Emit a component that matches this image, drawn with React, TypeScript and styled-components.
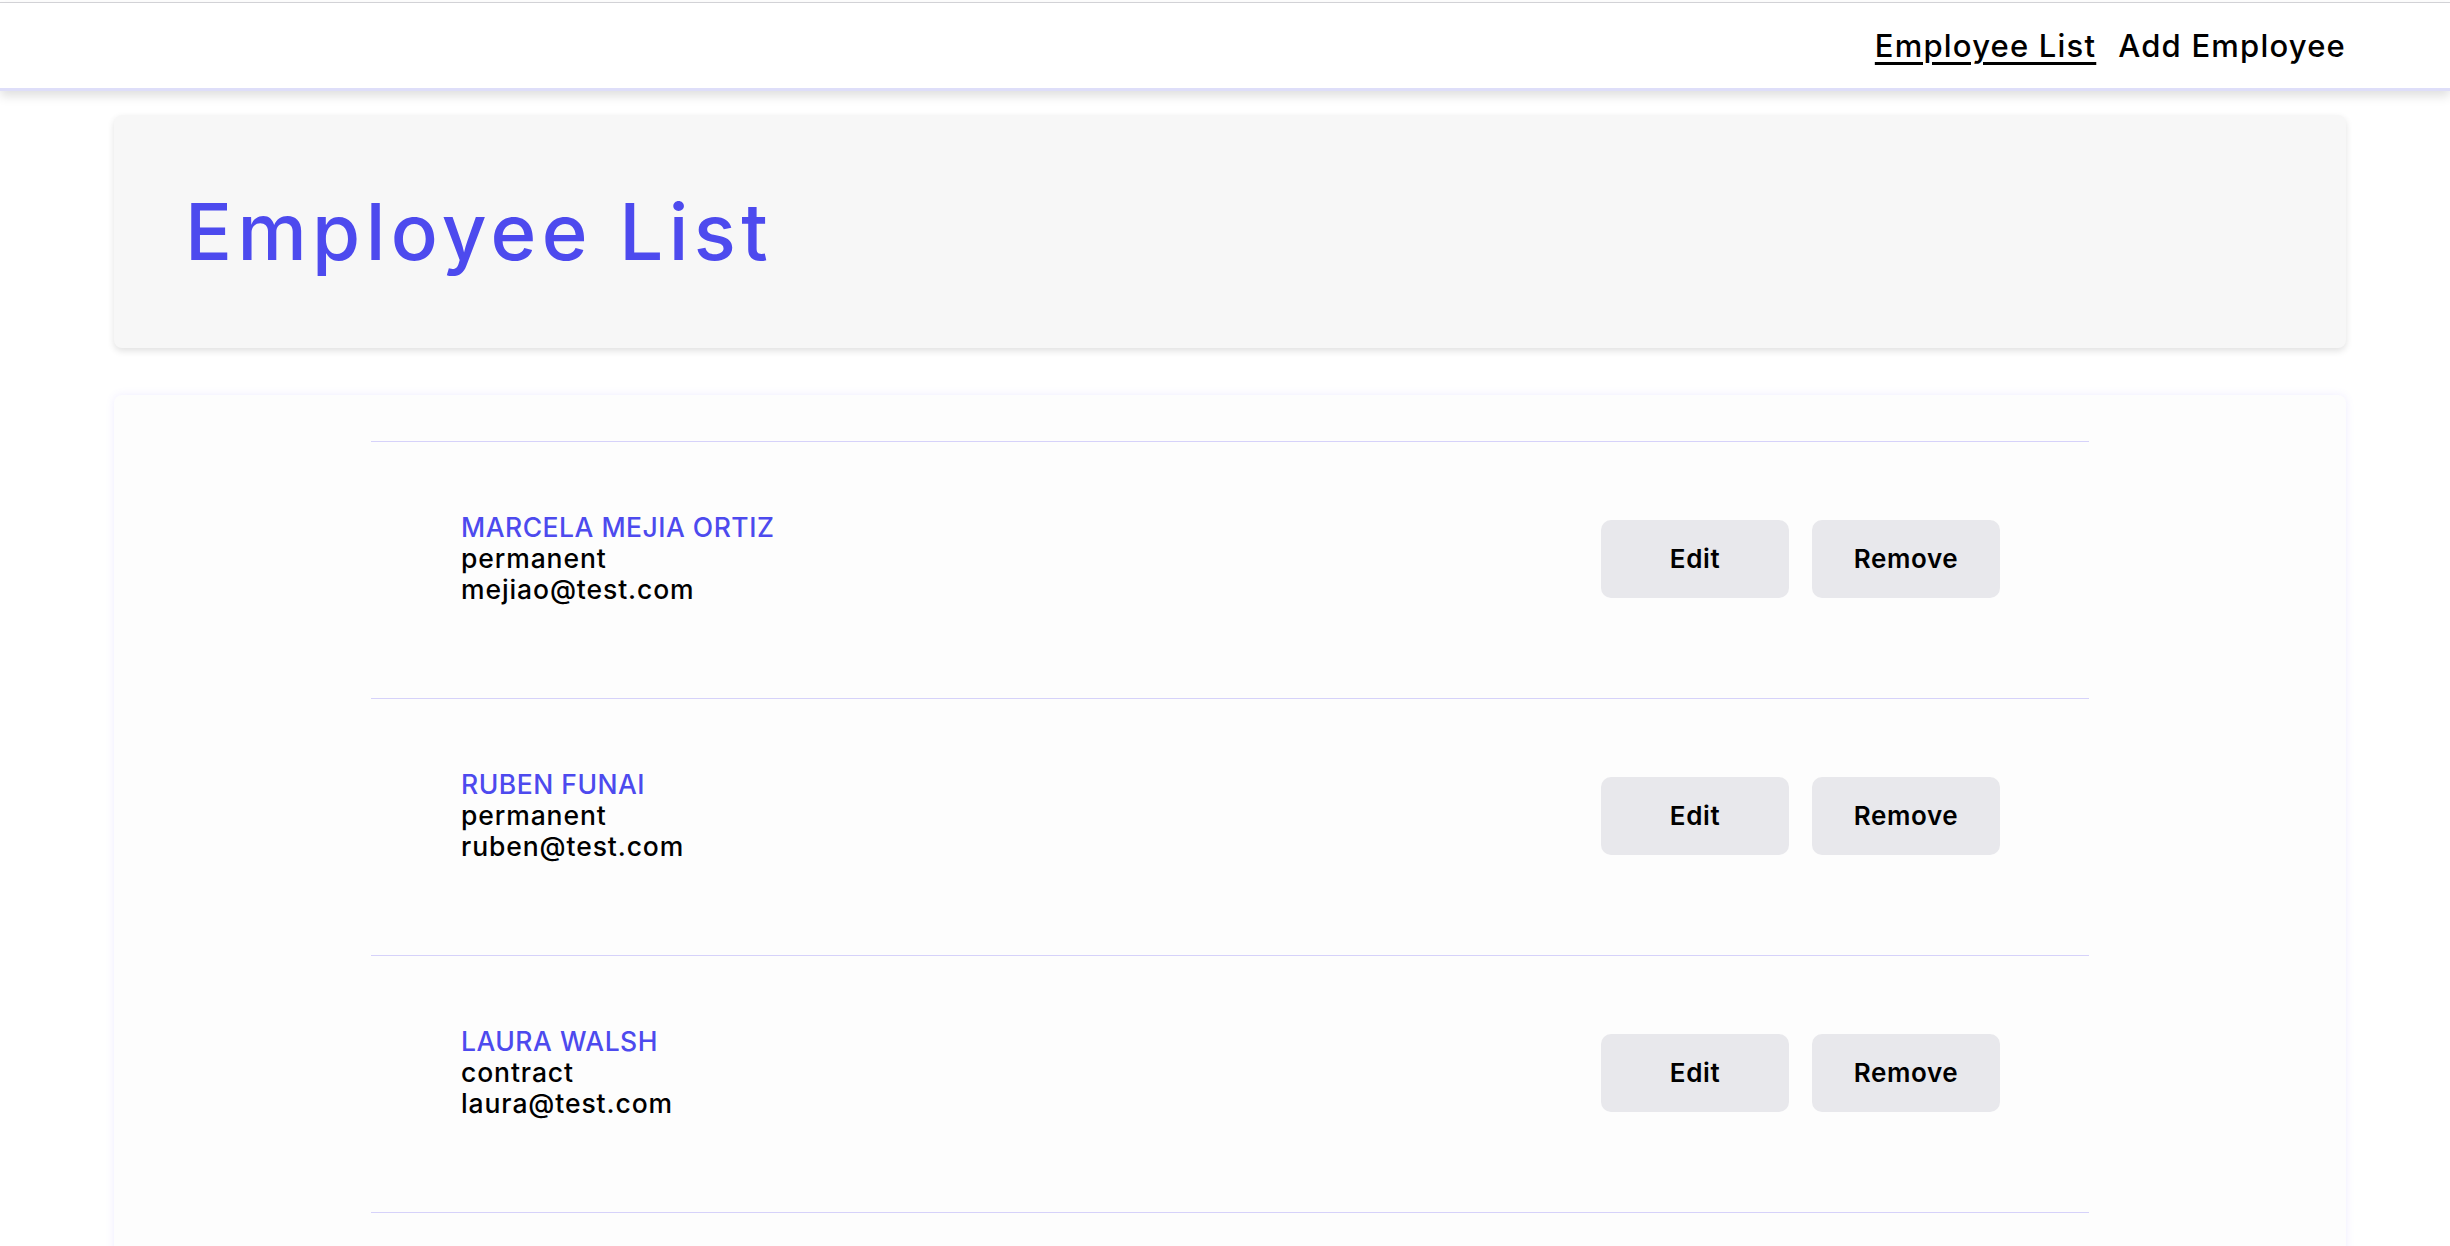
import styled, { createGlobalStyle } from 'styled-components';

type Employee = {
  id: number;
  name: string;
  type: string;
  email: string;
};

const employees: Employee[] = [
  { id: 1, name: 'Marcela Mejia Ortiz', type: 'permanent', email: 'mejiao@test.com' },
  { id: 2, name: 'Ruben Funai', type: 'permanent', email: 'ruben@test.com' },
  { id: 3, name: 'Laura Walsh', type: 'contract', email: 'laura@test.com' },
  { id: 4, name: 'Kai Tanaka', type: 'contract', email: 'kai@test.com' },
];

const GlobalStyle = createGlobalStyle`
  body {
    margin: 0;
    background: #ffffff;
    font-family: Inter, "Open Sans", "Noto Sans", sans-serif;
    color: #000;
  }
`;

const App = () => {
  return (
    <>
      <GlobalStyle />
      <Nav>
        <NavLink active>Employee List</NavLink>
        <NavLink>Add Employee</NavLink>
      </Nav>
      <Main>
        <HeaderCard>
          <Title>Employee List</Title>
        </HeaderCard>
        <ListCard>
          <List>
            {employees.map((e) => (
              <Row key={e.id}>
                <Info>
                  <Name>{e.name}</Name>
                  <Detail>{e.type}</Detail>
                  <Detail>{e.email}</Detail>
                </Info>
                <Actions>
                  <Button>Edit</Button>
                  <Button>Remove</Button>
                </Actions>
              </Row>
            ))}
          </List>
        </ListCard>
      </Main>
    </>
  );
};

const Nav = styled.nav`
  margin-top: 2px;
  height: 85px;
  border-top: 1px solid #d2d2d6;
  border-bottom: 3px solid #dedef9;
  box-shadow: 0 5px 10px rgba(0, 0, 0, 0.13);
  display: flex;
  align-items: center;
  justify-content: flex-end;
  gap: 22px;
  padding-right: 104px;
  background: #fff;
`;

const NavLink = styled.a<{ active?: boolean }>`
  font-size: 31px;
  font-weight: 500;
  letter-spacing: 1.2px;
  color: #000;
  cursor: pointer;
  text-decoration: ${(p) => (p.active ? 'underline' : 'none')};
  text-decoration-thickness: 3px;
  text-underline-offset: 5px;
`;

const Main = styled.main`
  padding: 24px 104px 0 114px;
  display: flex;
  flex-direction: column;
  gap: 47px;
`;

const HeaderCard = styled.section`
  height: 233px;
  box-sizing: border-box;
  background: #f7f7f7;
  border-radius: 8px;
  box-shadow: 0 3px 7px rgba(0, 0, 0, 0.12);
  display: flex;
  align-items: center;
  padding-left: 71px;
`;

const Title = styled.h1`
  margin: 0;
  font-size: 78px;
  font-weight: 500;
  letter-spacing: 5.4px;
  color: #4d4aee;
`;

const ListCard = styled.section`
  background: #fdfdfd;
  border-radius: 8px;
  box-shadow: 0 0 8px rgba(120, 100, 255, 0.12);
  padding: 46px 257px 0;
`;

const List = styled.div`
  display: flex;
  flex-direction: column;
`;

const Row = styled.div`
  border-top: 1px solid #d6d2fa;
  padding: 70px 89px 93px 90px;
  display: flex;
  align-items: center;
  justify-content: space-between;
`;

const Info = styled.div`
  display: flex;
  flex-direction: column;
  font-size: 26.5px;
  line-height: 31px;
`;

const Name = styled.span`
  color: #4d4aee;
  font-weight: 500;
  letter-spacing: 0.5px;
  text-transform: uppercase;
`;

const Detail = styled.span`
  color: #000;
  font-weight: 500;
  letter-spacing: 0.9px;
`;

const Actions = styled.div`
  display: flex;
  gap: 23px;
`;

const Button = styled.button`
  width: 188px;
  height: 78px;
  border: none;
  border-radius: 10px;
  background: #e8e8ec;
  font-family: inherit;
  font-size: 26px;
  font-weight: 600;
  letter-spacing: 0.6px;
  color: #000;
  cursor: pointer;
`;

export default App;
